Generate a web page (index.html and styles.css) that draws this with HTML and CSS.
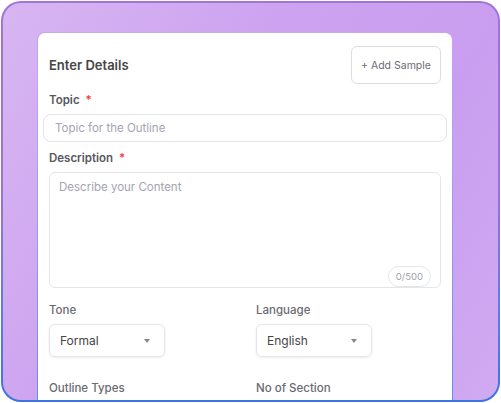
FILE: index.html
```html
<!DOCTYPE html>
<html>
<head>
<meta charset="utf-8">
<link rel="stylesheet" href="styles.css">
</head>
<body>
<div class="frame">
  <div class="frame-inner">
    <div class="card-edge">
      <div class="card">
        <div class="card-head">
          <h2 class="title">Enter Details</h2>
          <button class="sample-btn">+ Add Sample</button>
        </div>
        <label class="label">Topic <span class="req">*</span></label>
        <div class="input wide">Topic for the Outline</div>
        <label class="label">Description <span class="req">*</span></label>
        <div class="textarea">
          <span class="placeholder">Describe your Content</span>
          <span class="counter">0/500</span>
        </div>
        <div class="cols">
          <div class="col">
            <div class="label light">Tone</div>
            <div class="select">Formal <span class="caret"></span></div>
          </div>
          <div class="col">
            <div class="label light">Language</div>
            <div class="select">English <span class="caret"></span></div>
          </div>
        </div>
        <div class="cols bottom">
          <div class="label light">Outline Types</div>
          <div class="label light">No of Section</div>
        </div>
      </div>
    </div>
  </div>
</div>
</body>
</html>
```
FILE: styles.css
```css
* { box-sizing: border-box; }
html, body { margin: 0; padding: 0; background: #fff; }
body {
  width: 501px;
  height: 403px;
  padding: 1px 1px 0 1px;
  overflow: hidden;
  font-family: Inter, "Liberation Sans", sans-serif;
}
.frame {
  width: 499px;
  height: 401px;
  border-radius: 20px;
  padding: 2px;
  background: linear-gradient(to bottom, #a373d9 0%, #9a72da 45%, #5b7ce2 80%, #3a73e2 100%);
}
.frame-inner {
  height: 100%;
  border-radius: 18px;
  background: linear-gradient(120deg, #d7b6f2 0%, #cda2f0 40%, #c99ef0 70%, #d0aaf1 100%);
  padding: 29px 0 0 34px;
  overflow: hidden;
}
.card-edge {
  width: 416px;
  height: 100%;
  border-radius: 8px 8px 0 0;
  padding: 1px 1px 0 1px;
  background: linear-gradient(to bottom, #c9a6ee 0%, #9a9ee8 50%, #5f8fe6 100%);
}
.card {
  height: 100%;
  background: #fff;
  border-radius: 7px 7px 0 0;
  padding: 13px 11px 0 11px;
  overflow: hidden;
}
.card-head {
  display: flex;
  justify-content: space-between;
  align-items: center;
  height: 38px;
}
.title {
  margin: 0;
  font-size: 13px;
  font-weight: 600;
  color: #464646;
}
.sample-btn {
  width: 90px;
  height: 38px;
  border: 1px solid #dcdce2;
  border-radius: 6px;
  background: #fff;
  font-family: inherit;
  font-size: 10.5px;
  color: #6c6c78;
  padding: 0;
}
.label {
  display: block;
  font-size: 11.5px;
  font-weight: 600;
  color: #58585f;
  line-height: 16px;
  margin-top: 8px;
}
.label.light { font-weight: 500; color: #6a6a72; margin-top: 0; }
.req { color: #ef3b3b; margin-left: 3px; }
.input {
  margin: 6px -6px 0 -6px;
  height: 28px;
  border: 1px solid #e3e3ea;
  border-radius: 8px;
  padding: 0 11px;
  display: flex;
  align-items: center;
  font-size: 11.5px;
  color: #a4a4b2;
}
.textarea {
  margin-top: 6px;
  height: 116px;
  border: 1px solid #e6e6ea;
  border-radius: 6px;
  padding: 6px 9px;
  display: flex;
  flex-direction: column;
  justify-content: space-between;
  align-items: flex-start;
}
.placeholder { font-size: 11.5px; color: #a4a4b2; line-height: 16px; }
.counter {
  align-self: flex-end;
  margin-bottom: -6px;
  height: 21px;
  padding: 0 7px;
  border: 1px solid #e6e6ea;
  border-radius: 11px;
  font-size: 9.5px;
  color: #a0a0aa;
  display: flex;
  align-items: center;
}
.cols {
  display: grid;
  grid-template-columns: 185px 185px;
  column-gap: 22px;
  margin-top: 14px;
}
.cols.bottom { margin-top: 23px; }
.select {
  margin-top: 6px;
  width: 116px;
  height: 33px;
  border: 1px solid #e6e6ea;
  border-radius: 6px;
  box-shadow: 0 1px 3px rgba(0,0,0,0.08);
  padding: 0 14px 0 10px;
  display: flex;
  align-items: center;
  justify-content: space-between;
  font-size: 12px;
  color: #444;
}
.caret {
  width: 0;
  height: 0;
  border-left: 3.5px solid transparent;
  border-right: 3.5px solid transparent;
  border-top: 4px solid #888;
}
```
